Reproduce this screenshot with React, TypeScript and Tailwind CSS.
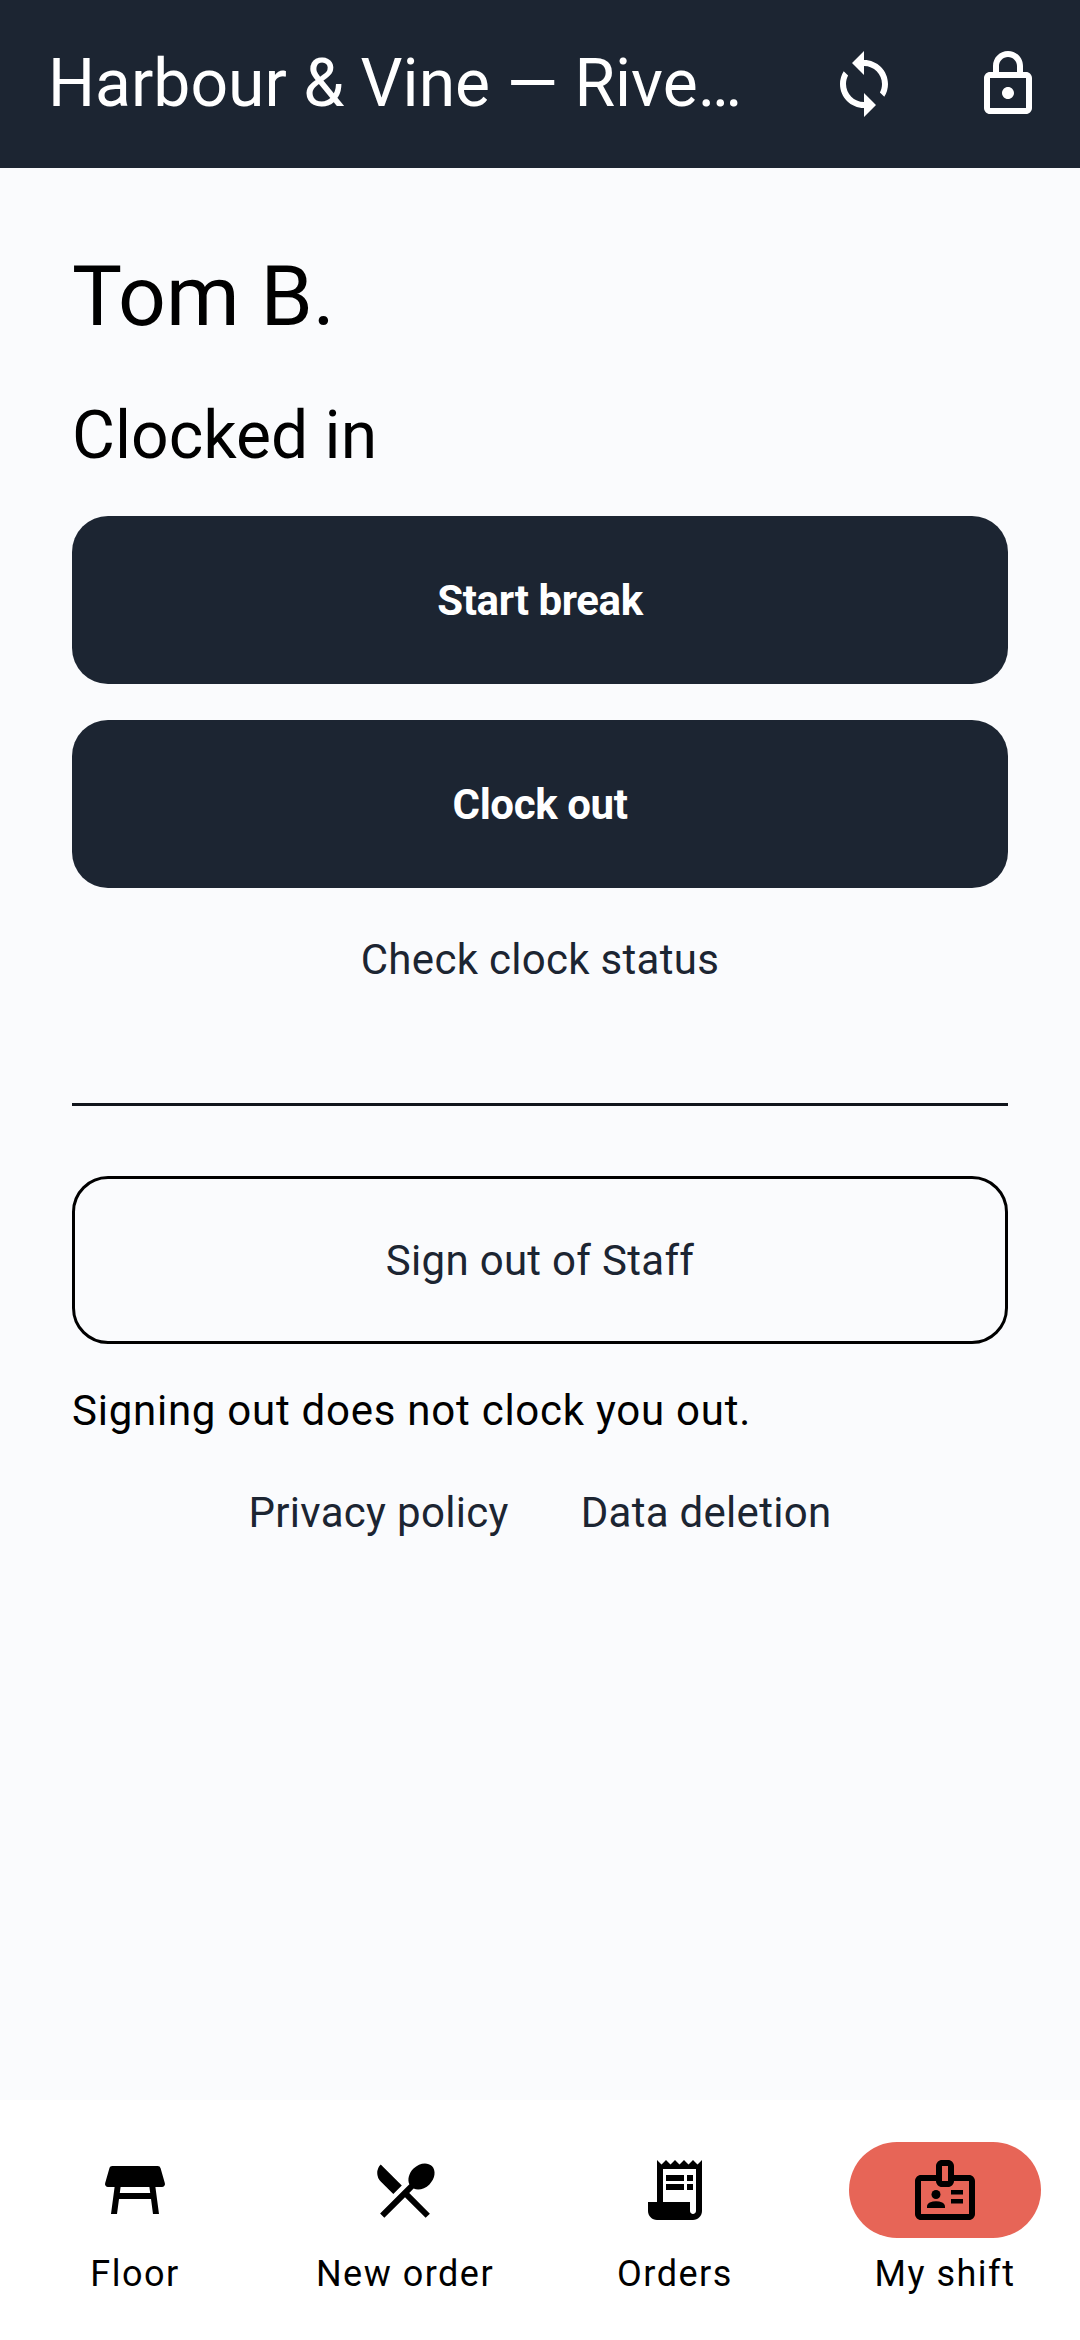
import { MdOutlineBadge, MdOutlineLock, MdReceiptLong, MdRestaurantMenu, MdSync, MdTableRestaurant } from "react-icons/md";
import type { IconType } from "react-icons";

const navItems: { label: string; icon: IconType; active?: boolean }[] = [
  { label: "Floor", icon: MdTableRestaurant },
  { label: "New order", icon: MdRestaurantMenu },
  { label: "Orders", icon: MdReceiptLong },
  { label: "My shift", icon: MdOutlineBadge, active: true },
];

function NavItem({ label, icon: Icon, active }: { label: string; icon: IconType; active?: boolean }) {
  return (
    <div className="flex flex-1 flex-col items-center pt-[42px]">
      <div className={`flex h-[96px] w-[192px] items-center justify-center rounded-full ${active ? "bg-[#e76557]" : ""}`}>
        <Icon size={72} color="#000" />
      </div>
      <span className="mt-[12px] text-[36px] leading-[48px] tracking-[1.5px] text-black">{label}</span>
    </div>
  );
}

export default function App() {
  return (
    <div className="flex h-[2340px] w-[1080px] flex-col overflow-hidden bg-[#fafbfd] font-['Roboto',sans-serif]">
      <header className="flex h-[168px] shrink-0 items-center bg-[#1c2532] pl-[48px]">
        <h1 className="min-w-0 flex-1 pr-[36px] text-[66px] font-normal leading-[88px] text-white">
          Harbour &amp; Vine — Rive…
        </h1>
        <div className="flex h-[144px] w-[144px] items-center justify-center">
          <MdSync size={72} color="#fff" />
        </div>
        <div className="flex h-[144px] w-[144px] items-center justify-center">
          <MdOutlineLock size={72} color="#fff" />
        </div>
      </header>

      <main className="flex flex-1 flex-col px-[72px] pt-[81px]">
        <h2 className="text-[84px] font-normal leading-[96px] text-black">Tom B.</h2>
        <p className="mt-[49px] text-[66px] leading-[84px] text-black">Clocked in</p>

        <button className="mt-[38px] flex h-[168px] items-center justify-center rounded-[36px] bg-[#1c2532] text-[42px] font-bold tracking-[-0.4px] text-white">
          Start break
        </button>
        <button className="mt-[36px] flex h-[168px] items-center justify-center rounded-[36px] bg-[#1c2532] text-[42px] font-bold tracking-[-0.4px] text-white">
          Clock out
        </button>
        <div className="mt-[24px] flex h-[120px] items-start justify-center pt-[20px] text-[42px] leading-[56px] tracking-[0.3px] text-[#1c2532]">
          Check clock status
        </div>

        <div className="mt-[71px] h-[3px] bg-[#11151c]" />

        <button className="mt-[70px] flex h-[168px] items-center justify-center rounded-[36px] border-[3px] border-black text-[42px] tracking-[0.3px] text-[#1c2532]">
          Sign out of Staff
        </button>
        <p className="mt-[39px] text-[42px] leading-[56px] tracking-[0.75px] text-black">Signing out does not clock you out.</p>

        <div className="mt-[46px] flex justify-center gap-[72px] text-[42px] leading-[56px] tracking-[0.3px] text-[#1c2532]">
          <span>Privacy policy</span>
          <span>Data deletion</span>
        </div>
      </main>

      <nav className="flex h-[240px] shrink-0 bg-white">
        {navItems.map((item) => (
          <NavItem key={item.label} {...item} />
        ))}
      </nav>
    </div>
  );
}
